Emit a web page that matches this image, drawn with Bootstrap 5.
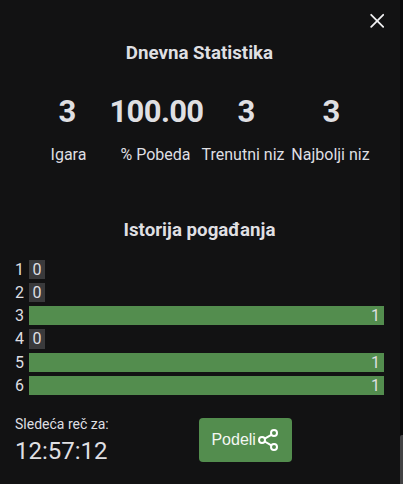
<!DOCTYPE html>
<html lang="sr-Latn" class="h-100">
<head>
<meta charset="utf-8">
<meta name="viewport" content="width=device-width, initial-scale=1">
<title>Dnevna Statistika</title>
<link rel="stylesheet" href="https://cdn.jsdelivr.net/npm/bootstrap@5.3.0/dist/css/bootstrap.min.css">
<style>
body{background:#121213;color:#dfdfe2;font-family:Roboto,"Liberation Sans",sans-serif;font-size:16px;line-height:20px}
.dialog-pane{padding:0 16px 0 15px}
.close-btn{width:16px;height:16px;margin:13px 0 0}
.title{font-size:18.72px;line-height:22px;font-weight:700}
.title-stats{margin-top:13px}
.title-hist{margin-top:54px}
.stat-num{font-size:31px;line-height:38px;font-weight:700}
.stat-wide{letter-spacing:-.65px}
.stats{margin:29px 0 0 11px}
.s1{width:83px}.s2{width:95px}.s3{width:85px}.s4{width:85px}
.stat-label{margin-top:14px;white-space:nowrap}
.s1 .stat-label{padding-left:2px}.s2 .stat-label{padding-right:2px}
.s3 .stat-label{margin-left:-6px;margin-right:1px}.s4 .stat-label{padding-right:2px}
.hist{margin-top:18.5px;gap:3.9px}
.guess{height:19.4px;line-height:19.4px}
.guess-no{width:14px}
.bar-fill{background:#538d4e;padding-right:4px}
.bar-empty{background:#3a3a3c;width:16px}
.foot{margin-top:19.4px}
.next-label{font-size:14px;line-height:18px}
.timer{font-size:24px;line-height:30px;margin-top:3px}
.share{background:#538d4e;color:#f4f7f3;width:93px;height:44px;border-radius:4px;margin-left:90.5px;font-family:"Liberation Sans",Arial,sans-serif;line-height:20px}
.track{width:3px;background:#09090a}
.thumb{height:49px;background:#424244;border-top-left-radius:2px}
</style>
</head>
<body class="d-flex h-100 overflow-hidden">
<main class="dialog-pane flex-grow-1">
  <div class="d-flex justify-content-end">
    <button class="close-btn btn p-0 border-0 d-flex" aria-label="Zatvori">
      <svg width="16" height="16" viewBox="0 0 16 16" fill="none" stroke="#f0f0f2" stroke-width="1.8" stroke-linecap="round"><path d="M3.2 1.8 15.2 13.8M15.2 1.8 3.2 13.8"/></svg>
    </button>
  </div>
  <h1 class="title title-stats text-center mb-0">Dnevna Statistika</h1>
  <section class="stats d-flex text-center">
    <div class="s1"><div class="stat-num">3</div><div class="stat-label">Igara</div></div>
    <div class="s2"><div class="stat-num stat-wide">100.00</div><div class="stat-label">% Pobeda</div></div>
    <div class="s3"><div class="stat-num">3</div><div class="stat-label">Trenutni niz</div></div>
    <div class="s4"><div class="stat-num">3</div><div class="stat-label">Najbolji niz</div></div>
  </section>
  <h2 class="title title-hist text-center mb-0">Istorija pogađanja</h2>
  <section class="hist d-flex flex-column">
    <div class="guess d-flex"><div class="guess-no">1</div><div class="bar-empty text-center">0</div></div>
    <div class="guess d-flex"><div class="guess-no">2</div><div class="bar-empty text-center">0</div></div>
    <div class="guess d-flex"><div class="guess-no">3</div><div class="bar-fill flex-grow-1 text-end">1</div></div>
    <div class="guess d-flex"><div class="guess-no">4</div><div class="bar-empty text-center">0</div></div>
    <div class="guess d-flex"><div class="guess-no">5</div><div class="bar-fill flex-grow-1 text-end">1</div></div>
    <div class="guess d-flex"><div class="guess-no">6</div><div class="bar-fill flex-grow-1 text-end">1</div></div>
  </section>
  <footer class="foot d-flex align-items-center">
    <div class="text-nowrap"><div class="next-label">Sledeća reč za:</div><div class="timer">12:57:12</div></div>
    <button class="share btn p-0 border-0 d-flex align-items-center justify-content-center">
      <span>Podeli</span>
      <svg width="24" height="24" viewBox="0 0 24 24" fill="none" stroke="#fff" stroke-width="2"><path d="m8.7 10.7 6.6-3.9M8.7 13.5l6.6 3.9"/><circle cx="6" cy="12" r="3"/><circle cx="18" cy="5" r="3"/><circle cx="18" cy="19" r="3"/></svg>
    </button>
  </footer>
</main>
<aside class="track d-flex flex-column justify-content-end"><div class="thumb"></div></aside>
<script src="https://cdn.jsdelivr.net/npm/bootstrap@5.3.0/dist/js/bootstrap.bundle.min.js"></script>
</body>
</html>
